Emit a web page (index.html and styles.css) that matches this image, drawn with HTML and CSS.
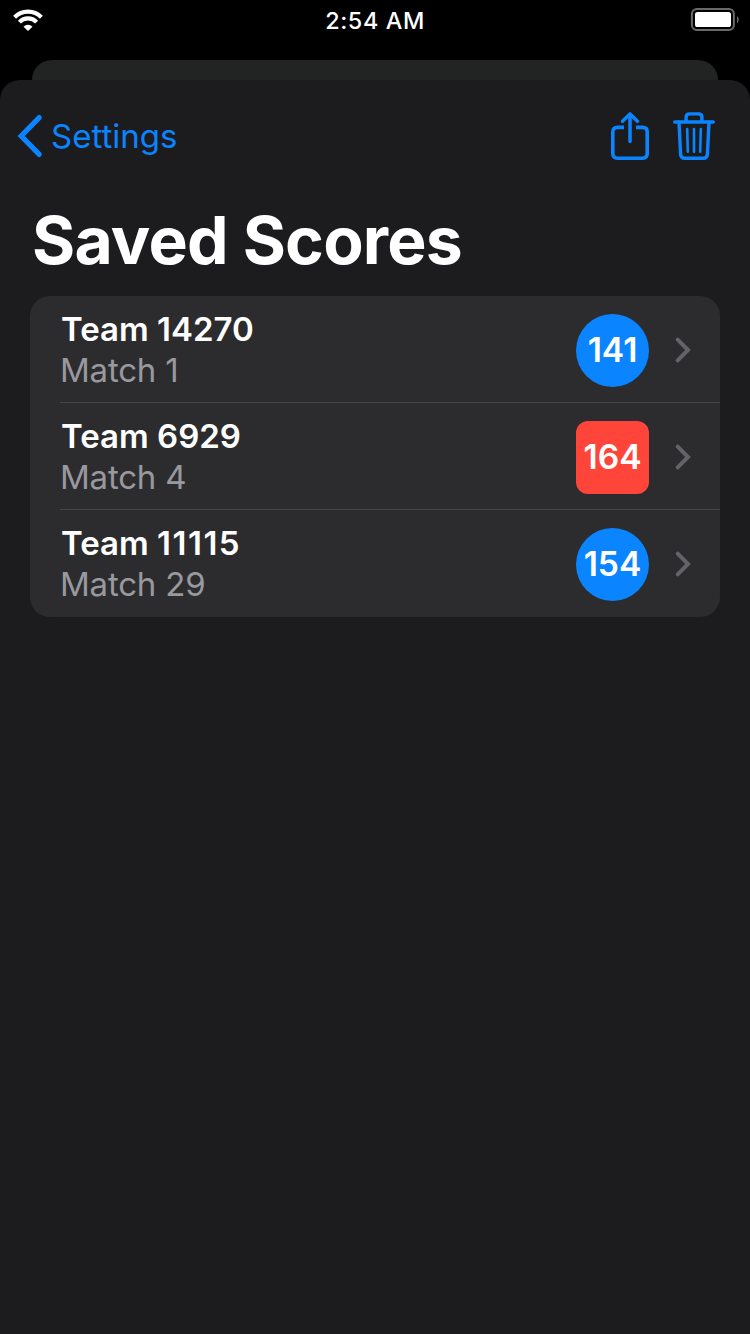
FILE: index.html
```html
<!DOCTYPE html>
<html lang="en">
<head>
<meta charset="utf-8">
<title>Saved Scores</title>
<link rel="stylesheet" href="styles.css">
</head>
<body>
<div class="screen">
  <header class="status">
    <svg class="wifi" width="32" height="24" viewBox="0 0 32 24" fill="none" stroke="#fff" stroke-width="4.2">
      <path d="M2.6 9.2A19 19 0 0 1 29.4 9.2"/>
      <path d="M7.4 14.1A12 12 0 0 1 24.6 14.1"/>
      <path d="M16 23L11.5 18.7A6.3 6.3 0 0 1 20.5 18.7Z" fill="#fff" stroke="none"/>
    </svg>
    <span class="time">2:54 AM</span>
    <svg class="battery" width="50" height="24" viewBox="0 0 50 24">
      <rect x="1.9" y="1" width="42" height="21" rx="5" fill="none" stroke="#69696b" stroke-width="2"/>
      <rect x="5" y="4" width="36" height="15" rx="2.6" fill="#fff"/>
      <path d="M47 8Q48.7 9.2 48.7 11.5T47 15.2Z" fill="#69696b"/>
    </svg>
  </header>
  <div class="back-card"></div>
  <main class="sheet">
    <nav class="nav">
      <a class="back">
        <svg width="28" height="46" viewBox="0 0 28 46" fill="none" stroke="#0a84ff" stroke-width="5.2" stroke-linecap="round" stroke-linejoin="miter"><path d="M24.2 4.6L6.2 23L24.2 41.4"/></svg>
        <span>Settings</span>
      </a>
      <div class="actions">
        <svg width="42" height="52" viewBox="0 0 42 52" fill="none" stroke="#0a84ff" stroke-width="3.6" stroke-linecap="round" stroke-linejoin="round">
          <path stroke-linecap="butt" d="M15 17.4H8.4Q3.8 17.4 3.8 22V43.6Q3.8 48.2 8.4 48.2H33.6Q38.2 48.2 38.2 43.6V22Q38.2 17.4 33.6 17.4H27"/>
          <path stroke-width="3.5" d="M21 31.5V4.5M13.5 11.2L21 3.9L28.5 11.2"/>
        </svg>
        <svg width="44" height="52" viewBox="0 0 44 52" fill="none" stroke="#0a84ff" stroke-width="3.4" stroke-linecap="round" stroke-linejoin="round">
          <path d="M2.7 12H41.3M14.1 12V7.3Q14.1 3.9 17.4 3.9H26.6Q29.9 3.9 29.9 7.3V12"/>
          <path d="M7 12L8.6 44.3Q8.9 48.2 12.8 48.2H31.2Q35.1 48.2 35.4 44.3L37 12"/>
          <path stroke-width="2.6" d="M15.2 19L15.8 41.8M22 19V41.8M28.8 19L28.2 41.8"/>
        </svg>
      </div>
    </nav>
    <h1 class="title">Saved Scores</h1>
    <ul class="list">
      <li class="row">
        <div class="info"><b class="team">Team 14270</b><span class="match">Match 1</span></div>
        <span class="score blue">141</span>
        <svg class="chevron" width="18" height="28" viewBox="0 0 18 28"><path d="M3.7 3.7L14 14L3.7 24.3"/></svg>
      </li>
      <li class="row">
        <div class="info"><b class="team">Team 6929</b><span class="match">Match 4</span></div>
        <span class="score red">164</span>
        <svg class="chevron" width="18" height="28" viewBox="0 0 18 28"><path d="M3.7 3.7L14 14L3.7 24.3"/></svg>
      </li>
      <li class="row">
        <div class="info"><b class="team">Team <span class="ones">11115</span></b><span class="match">Match 29</span></div>
        <span class="score blue">154</span>
        <svg class="chevron" width="18" height="28" viewBox="0 0 18 28"><path d="M3.7 3.7L14 14L3.7 24.3"/></svg>
      </li>
    </ul>
  </main>
</div>
</body>
</html>
```
FILE: styles.css
```css
* { box-sizing: border-box; }
body { margin: 0; background: #000; font-family: Inter, "Liberation Sans", sans-serif; color: #fff; }
svg { display: block; flex: none; }
.screen { width: 750px; height: 1334px; display: flex; flex-direction: column; overflow: hidden; }
.status { height: 60px; flex: none; display: grid; grid-template-columns: 1fr auto 1fr; align-items: start; padding: 8px 10px 0 12px; }
.time { padding-top: 1px; margin-left: -2px; font-size: 23.4px; line-height: 24px; font-weight: 500; letter-spacing: 0.6px; }
.battery { justify-self: end; }
.back-card { height: 20px; flex: none; margin: 0 32px; border-radius: 20px 20px 0 0; background: #222323; }
.sheet { flex: 1; background: #1c1c1e; border-radius: 20px 20px 0 0; }
.nav { height: 112px; display: flex; justify-content: space-between; padding: 30px 34px 0 15px; }
.back { display: flex; height: 52px; align-items: center; gap: 8px; color: #0a84ff; font-size: 33px; }
.actions { display: flex; gap: 21px; }
.title { margin: 0; padding: 8px 32px 0; height: 104px; font-size: 66px; line-height: 80px; font-weight: 700; letter-spacing: -0.78px; white-space: nowrap; }
.list { list-style: none; margin: 0 30px; padding: 0; background: #2c2c2e; border-radius: 20px; }
.row { height: 107px; display: flex; align-items: center; margin-left: 30px; padding-right: 28px; }
.row:not(:last-child) { box-shadow: inset 0 -1px #464649; }
.info { flex: 1; display: flex; flex-direction: column; font-size: 33px; line-height: 41px; }
.team { padding-left: 1px; font-weight: 600; }
.ones { letter-spacing: 1.5px; }
.match { color: #98989f; letter-spacing: -0.2px; }
.score { width: 73px; height: 73px; margin: 2px 25px 0 0; padding-bottom: 2px; display: flex; align-items: center; justify-content: center; font-size: 33.6px; font-weight: 600; }
.blue { background: #0a84ff; border-radius: 50%; }
.red { background: #ff453a; border-radius: 12px; }
.chevron { fill: none; stroke: #646468; stroke-width: 4; stroke-linecap: round; stroke-linejoin: miter; }
```
